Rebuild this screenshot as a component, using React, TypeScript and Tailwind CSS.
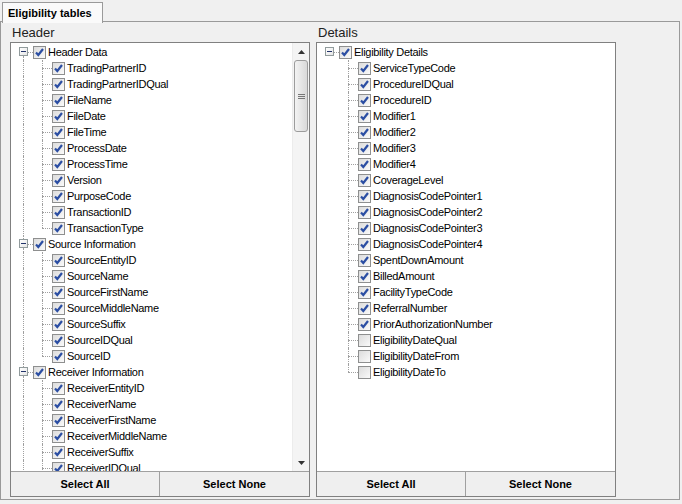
import React from 'react'

// Eligibility tables: two checkbox trees with Select All / Select None bars.

type Node = { label: string; checked?: boolean; children?: { label: string; checked?: boolean }[] }

const headerTree: Node[] = [
  {
    label: 'Header Data',
    children: [
      'TradingPartnerID',
      'TradingPartnerIDQual',
      'FileName',
      'FileDate',
      'FileTime',
      'ProcessDate',
      'ProcessTime',
      'Version',
      'PurposeCode',
      'TransactionID',
      'TransactionType',
    ].map((l) => ({ label: l, checked: true })),
  },
  {
    label: 'Source Information',
    children: [
      'SourceEntityID',
      'SourceName',
      'SourceFirstName',
      'SourceMiddleName',
      'SourceSuffix',
      'SourceIDQual',
      'SourceID',
    ].map((l) => ({ label: l, checked: true })),
  },
  {
    label: 'Receiver Information',
    children: [
      'ReceiverEntityID',
      'ReceiverName',
      'ReceiverFirstName',
      'ReceiverMiddleName',
      'ReceiverSuffix',
      'ReceiverIDQual',
      'ReceiverID',
      'ReceiverAddress',
    ].map((l) => ({ label: l, checked: true })),
  },
  { label: 'Subscriber Information', children: [] },
]

const detailsTree: Node[] = [
  {
    label: 'Eligibility Details',
    children: [
      ...[
        'ServiceTypeCode',
        'ProcedureIDQual',
        'ProcedureID',
        'Modifier1',
        'Modifier2',
        'Modifier3',
        'Modifier4',
        'CoverageLevel',
        'DiagnosisCodePointer1',
        'DiagnosisCodePointer2',
        'DiagnosisCodePointer3',
        'DiagnosisCodePointer4',
        'SpentDownAmount',
        'BilledAmount',
        'FacilityTypeCode',
        'ReferralNumber',
        'PriorAuthorizationNumber',
      ].map((l) => ({ label: l, checked: true })),
      ...['EligibilityDateQual', 'EligibilityDateFrom', 'EligibilityDateTo'].map((l) => ({ label: l, checked: false })),
    ],
  },
]

const dot = 'border-dotted border-[#a0a0a0]'

function CheckBox({ checked }: { checked: boolean }) {
  return (
    <span className="w-[13px] h-[13px] shrink-0 border border-[#8e8f8f] bg-gradient-to-br from-[#dcdcdc] to-[#fafafa] flex items-center justify-center">
      {checked && (
        <svg width="11" height="11" viewBox="0 0 11 11">
          <path d="M2 5.5 L4.3 8 L9 2" fill="none" stroke="#2b4ea3" strokeWidth="2.2" />
        </svg>
      )}
    </span>
  )
}

function Expander() {
  return (
    <span className="w-[9px] h-[9px] shrink-0 border border-[#919b9c] bg-gradient-to-br from-white to-[#e6e6e6] flex items-center justify-center">
      <span className="w-[5px] h-px bg-[#22336a]" />
    </span>
  )
}

function Tree({ nodes, rootLines }: { nodes: Node[]; rootLines: boolean }) {
  return (
    <div
      className="flex flex-col pt-px text-[11px] tracking-[-0.3px] text-black leading-none"
      style={{ fontFamily: '"Liberation Sans", Arial, sans-serif' }}
    >
      {nodes.map((n, ri) => {
        const first = ri === 0
        const last = ri === nodes.length - 1
        const kids = n.children ?? []
        return (
          <React.Fragment key={n.label}>
            <div className="flex h-4 items-center">
              <div className="w-2 shrink-0" />
              <div className="w-[9px] h-4 shrink-0 flex flex-col">
                <div className={`h-[3px] w-[5px] ${rootLines && !first ? `border-r ${dot}` : ''}`} />
                {kids.length > 0 ? <Expander /> : <div className={`h-[9px] w-[5px] ${rootLines ? `border-r ${dot}` : ''}`} />}
                <div className={`flex-1 w-[5px] ${rootLines && !last ? `border-r ${dot}` : ''}`} />
              </div>
              <div className={`w-[5px] shrink-0 border-t ${dot}`} />
              <CheckBox checked={n.checked ?? true} />
              <span className="ml-[2px] whitespace-nowrap">{n.label}</span>
            </div>
            {kids.map((c, ci) => {
              const lastKid = ci === kids.length - 1
              return (
                <div key={c.label} className="flex h-4 items-center">
                  <div className="w-3 shrink-0" />
                  <div className={`w-px h-4 shrink-0 ${rootLines && !last ? `border-l ${dot}` : ''}`} />
                  <div className="w-[18px] shrink-0" />
                  <div className="w-[10px] h-4 shrink-0 flex flex-col">
                    <div className={`h-2 border-l ${dot}`} />
                    <div className={`border-t ${dot}`} />
                    <div className={`flex-1 ${!lastKid ? `border-l ${dot}` : ''}`} />
                  </div>
                  <CheckBox checked={c.checked ?? true} />
                  <span className="ml-[2px] whitespace-nowrap">{c.label}</span>
                </div>
              )
            })}
          </React.Fragment>
        )
      })}
    </div>
  )
}

function ScrollBar() {
  return (
    <div className="w-[17px] shrink-0 h-full bg-[#f4f4f4] border-l border-[#ececec] flex flex-col">
      <div className="h-[17px] flex items-center justify-center">
        <svg width="7" height="4" viewBox="0 0 7 4">
          <path d="M0 4 L3.5 0 L7 4 Z" fill="#333" />
        </svg>
      </div>
      <div className="h-[72px] mx-px rounded-[3px] border border-[#9c9c9c] bg-gradient-to-r from-[#f3f3f3] to-[#d9d9d9] flex flex-col items-center justify-center gap-px">
        <span className="w-[7px] h-px bg-[#777]" />
        <span className="w-[7px] h-px bg-[#777]" />
        <span className="w-[7px] h-px bg-[#777]" />
      </div>
      <div className="flex-1" />
      <div className="h-[17px] flex items-center justify-center">
        <svg width="7" height="4" viewBox="0 0 7 4">
          <path d="M0 0 L3.5 4 L7 0 Z" fill="#333" />
        </svg>
      </div>
    </div>
  )
}

function Column({ title, nodes, rootLines, scroll }: { title: string; nodes: Node[]; rootLines: boolean; scroll: boolean }) {
  return (
    <div className="w-[300px] flex flex-col">
      <div className="h-5 pl-[2px] pt-[4px] text-[13px] leading-none text-[#222]" style={{ fontFamily: '"Liberation Sans", Arial, sans-serif' }}>
        {title}
      </div>
      <div className="h-[455px] border border-[#808080] flex flex-col">
        <div className="flex-1 flex bg-white overflow-hidden">
          <div className="flex-1 overflow-hidden">
            <Tree nodes={nodes} rootLines={rootLines} />
          </div>
          {scroll && <ScrollBar />}
        </div>
        <div className="h-[25px] border-t border-[#a0a0a0] flex bg-[#efefef] text-[11px] font-bold text-black" style={{ fontFamily: '"Liberation Sans", Arial, sans-serif' }}>
          <div className="w-[149px] border-r border-[#a0a0a0] flex items-center justify-center">Select All</div>
          <div className="flex-1 flex items-center justify-center">Select None</div>
        </div>
      </div>
    </div>
  )
}

export default function App() {
  return (
    <div className="w-[682px] h-[504px] bg-[#f0f0f0] overflow-hidden">
      <div className="h-[22px] pl-[2px] pt-[2px] flex">
        <div
          className="w-[101px] h-[21px] border border-b-0 border-[#9a9a9a] bg-[#fafafa] flex items-center pl-[5px] text-[11px] font-bold text-black relative z-10"
          style={{ fontFamily: '"Liberation Sans", Arial, sans-serif' }}
        >
          Eligibility tables
        </div>
      </div>
      <div className="w-[680px] h-[479px] -mt-px border border-[#9a9a9a] flex gap-[6px] pl-[9px]">
        <Column title="Header" nodes={headerTree} rootLines scroll />
        <Column title="Details" nodes={detailsTree} rootLines={false} scroll={false} />
      </div>
    </div>
  )
}
